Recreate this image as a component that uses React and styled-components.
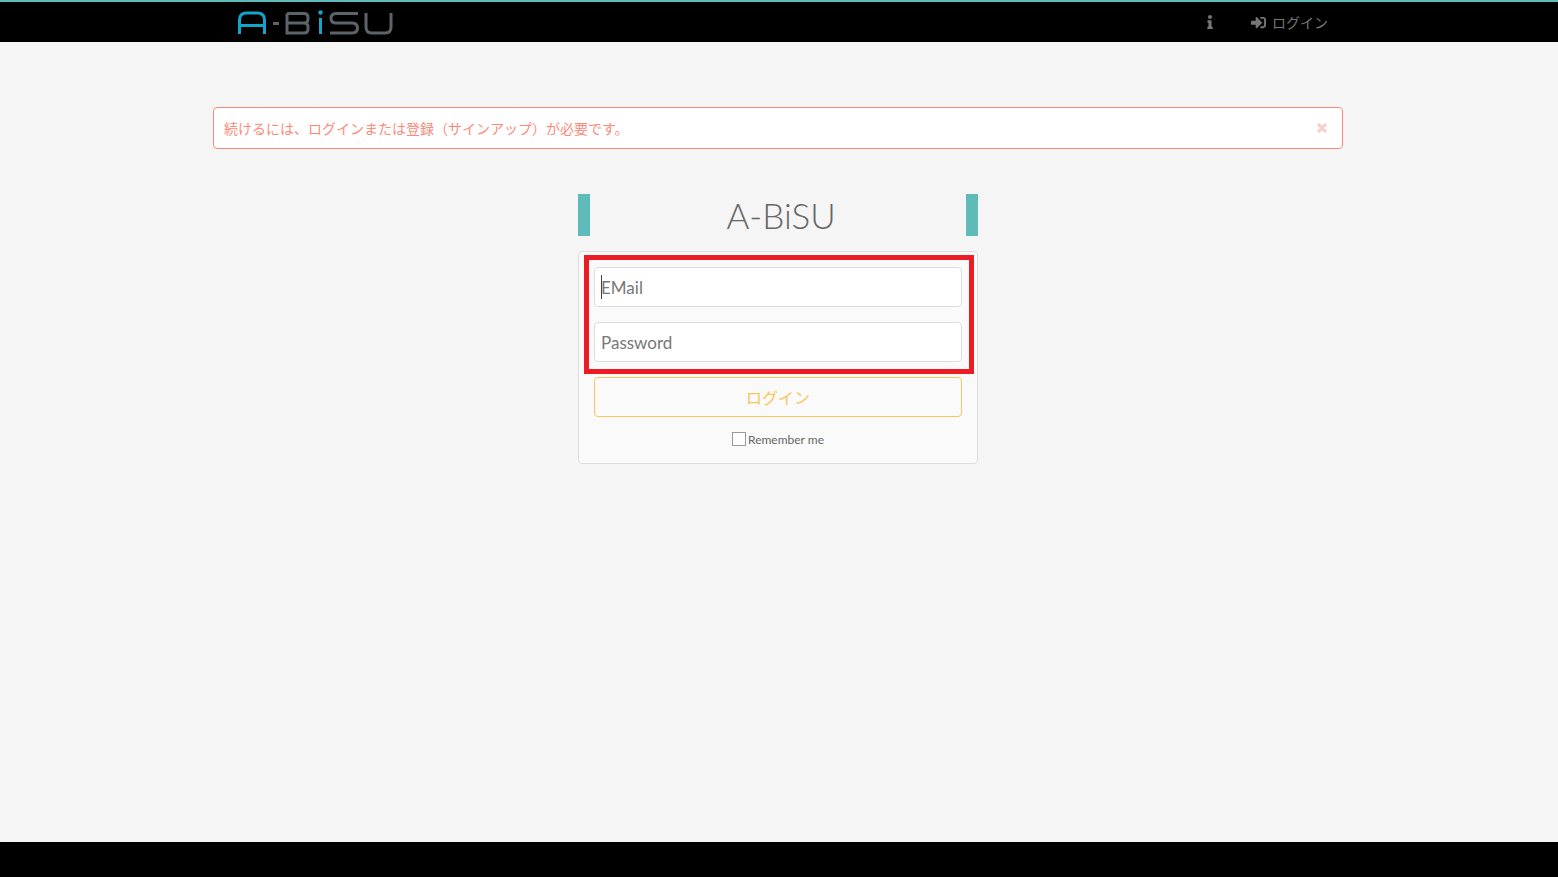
import React from 'react'
import styled, { createGlobalStyle } from 'styled-components'
import { FaInfo, FaSignInAlt } from 'react-icons/fa'

const GlobalStyle = createGlobalStyle`
    html, body {
        margin: 0;
        padding: 0;
        height: 100%;
    }
    body {
        background: #f5f5f5;
        font-family: "Lato", "Noto Sans CJK JP", sans-serif;
        color: #666;
    }
    * {
        box-sizing: border-box;
    }
`;

const Page = styled.div`
    height: 877px;
    display: flex;
    flex-direction: column;
    overflow: hidden;
`;

const Navbar = styled.header`
    height: 42px;
    flex: none;
    background: #000;
    border-top: 2px solid #5fbaba;
    display: flex;
    align-items: center;
    padding-left: 238px;
    padding-right: 230px;
`;

const Logo = styled.svg`
    width: 156px;
    height: 28px;
    display: block;
`;

const NavLinks = styled.nav`
    margin-left: auto;
    display: flex;
    align-items: center;
    gap: 34px;
    height: 100%;
`;

const NavLink = styled.a`
    display: flex;
    align-items: center;
    gap: 6px;
    font-size: 14px;
    color: #777;
    text-decoration: none;
`;

const Main = styled.main`
    flex: 1;
    display: flex;
    flex-direction: column;
    align-items: center;
    padding-top: 65px;
    padding-right: 2px;
`;

const Alert = styled.div`
    width: 1130px;
    height: 42px;
    background: #fff;
    border: 1px solid #fc8a7a;
    border-radius: 4px;
    display: flex;
    align-items: center;
    justify-content: space-between;
    padding: 0 15px 0 10px;
    font-size: 14px;
    color: #fc8a7a;
`;

const CloseButton = styled.span`
    display: flex;
`;

const LoginColumn = styled.div`
    position: relative;
    width: 400px;
    margin-top: 45px;
`;

const Title = styled.h1`
    margin: 0;
    height: 42px;
    border-left: 12px solid #5fbaba;
    border-right: 12px solid #5fbaba;
    text-align: center;
    font-family: "Lato", sans-serif;
    font-weight: 300;
    font-size: 35px;
    line-height: 42px;
    color: #666;
    padding-left: 6px;
`;

const Card = styled.form`
    margin-top: 15px;
    height: 213px;
    background: #fafafa;
    border: 1px solid #ddd;
    border-radius: 4px;
    padding: 15px;
    display: flex;
    flex-direction: column;
`;

const Field = styled.input`
    display: block;
    width: 100%;
    height: 40px;
    flex: none;
    margin-bottom: 15px;
    padding: 0 6px;
    background: #fff;
    border: 1px solid #ddd;
    border-radius: 4px;
    outline: none;
    font-family: "Lato", sans-serif;
    font-size: 17px;
    color: #666;

    &::placeholder {
        color: #777;
        opacity: 1;
    }
`;

// text caret of the focused email input, frozen as in the screenshot
const Caret = styled.span`
    position: absolute;
    left: 23px;
    top: 81px;
    width: 1px;
    height: 24px;
    background: #444;
`;

const LoginButton = styled.button`
    width: 100%;
    height: 40px;
    flex: none;
    background: #fafafa;
    border: 1px solid #fbc559;
    border-radius: 4px;
    font-family: "Lato", "Noto Sans CJK JP", sans-serif;
    font-size: 16px;
    color: #fbc559;
    padding: 0;
`;

const RememberRow = styled.label`
    margin-top: 15px;
    height: 14px;
    display: flex;
    align-items: center;
    justify-content: center;
    gap: 2px;
    font-size: 12px;
    line-height: 14px;
    color: #666;
`;

const RememberText = styled.span`
    padding-top: 2px;
`;

const CheckBox = styled.span`
    width: 14px;
    height: 14px;
    background: #fff;
    border: 1px solid #999;
`;

// red annotation drawn over the two inputs
const Highlight = styled.div`
    position: absolute;
    left: 6px;
    top: 61px;
    width: 390px;
    height: 119px;
    border: 5px solid #ed1c24;
    pointer-events: none;
`;

const Footer = styled.footer`
    height: 35px;
    flex: none;
    background: #000;
`;

const LogoMark = () => (
    <Logo viewBox="0 0 156 28" fill="none" strokeWidth="3">
        <g stroke="#12a5cc">
            <path d="M1.500 26V12Q1.500 5 8.500 5H19.500Q26.500 5 26.500 12V26" />
            <path d="M1.500 17.500H26.500" />
            <path d="M82.500 10V26" />
        </g>
        <circle cx="82.500" cy="4.500" r="2.200" fill="#12a5cc" />
        <g stroke="#5c6468">
            <path d="M35 15.500H41" />
            <path d="M49 5.500H66Q70 5.500 70 9.500V11Q70 15 66 15H49M66 15Q70 15 70 19V21Q70 25 66 25H49V5.500" />
            <path d="M120 5.500H98Q93 5.500 93 10.500Q93 15 98 15H114Q119.500 15 119.500 20Q119.500 25 114 25H92" />
            <path d="M128 5V19Q128 25 134 25H147Q153 25 153 19V5" />
        </g>
    </Logo>
)

const TimesIcon = () => (
    <svg width="10" height="10" viewBox="0 0 10 10" stroke="#fcd0ca" strokeWidth="3.200">
        <path d="M1 1L9 9M9 1L1 9" />
    </svg>
)

const App = () => {
    return (
        <Page>
            <GlobalStyle />
            <Navbar>
                <LogoMark />
                <NavLinks>
                    <NavLink href="#"><FaInfo size={14} /></NavLink>
                    <NavLink href="#"><FaSignInAlt size={15} /> ログイン</NavLink>
                </NavLinks>
            </Navbar>

            <Main>
                <Alert>
                    <span>続けるには、ログインまたは登録（サインアップ）が必要です。</span>
                    <CloseButton><TimesIcon /></CloseButton>
                </Alert>

                <LoginColumn>
                    <Title>A-BiSU</Title>
                    <Card>
                        <Field type="text" placeholder="EMail" />
                        <Field type="password" placeholder="Password" />
                        <LoginButton type="button">ログイン</LoginButton>
                        <RememberRow>
                            <CheckBox />
                            <RememberText>Remember me</RememberText>
                        </RememberRow>
                    </Card>
                    <Caret />
                    <Highlight />
                </LoginColumn>
            </Main>

            <Footer />
        </Page>
    )
}

export default App
